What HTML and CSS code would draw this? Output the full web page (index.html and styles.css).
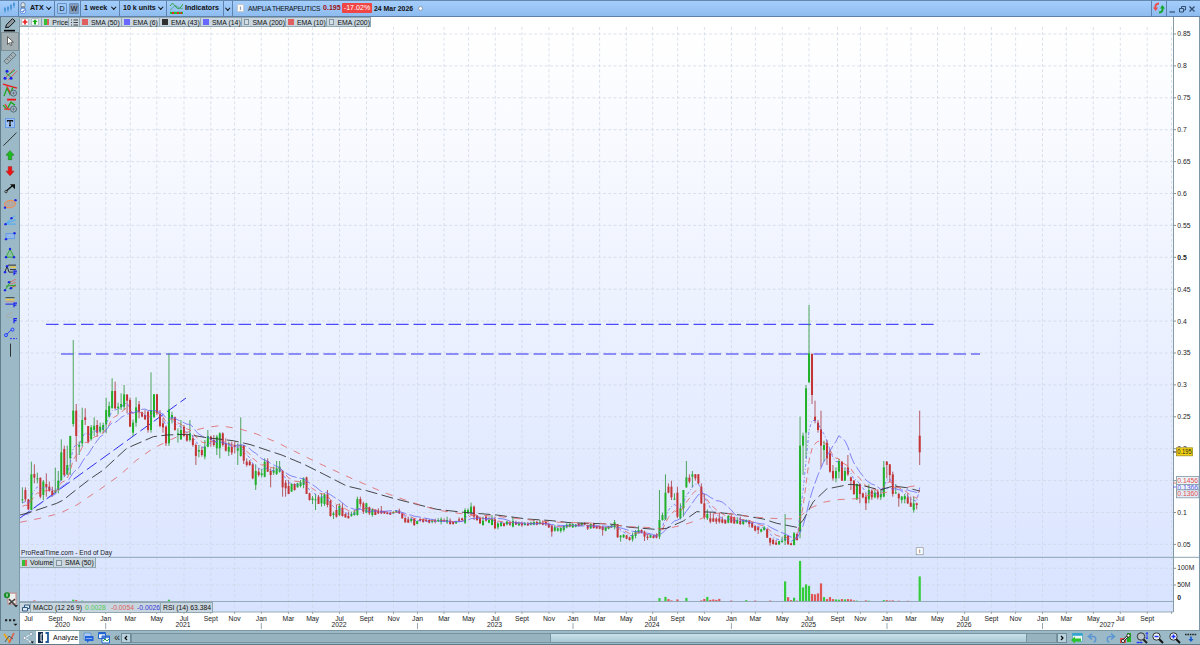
FILE: index.html
```html
<!DOCTYPE html>
<html lang="en">
<head>
    <meta charset="UTF-8">
    <title>ATX - AMPLIA THERAPEUTICS</title>
    <link rel="stylesheet" href="styles.css">
</head>
<body>
<div class="app">
    <!-- Top bar -->
    <div class="topbar">
        <div class="cell" style="width:19px"><svg width="12" height="12" viewBox="0 0 12 12"><path d="M2 5v6M5 4v6M8 2v7M11 0v6" stroke="#3f8fd2" stroke-width="0.7"/><path d="M2 6v3M5 5v3M8 3v4M11 1v3" stroke="#3f8fd2" stroke-width="1.5"/></svg></div>
        <div class="cell symbol">
            <svg width="8" height="12" viewBox="0 0 8 12"><rect x="2" y="0.5" width="4" height="5" rx="2" fill="#dde5ec" stroke="#6a7885" stroke-width="0.8"/><rect x="2" y="4.5" width="4" height="5" rx="2" fill="none" stroke="#6a7885" stroke-width="0.8"/><circle cx="4" cy="9" r="2.8" fill="#eef4ff" stroke="#3d79d8" stroke-width="0.7"/><path d="M2.5 9l1 1.3L5.8 7.6" fill="none" stroke="#2458c8"/></svg>
            <b>ATX</b><i class="chev"></i>
        </div>
        <div class="cell period"><span>D</span><span class="on">W</span></div>
        <div class="cell drop" style="width:39px"><b>1 week</b><i class="chev"></i></div>
        <div class="cell drop" style="width:47px"><b>10 k units</b><i class="chev"></i></div>
        <div class="cell drop" style="width:57px">
            <svg width="13" height="12" viewBox="0 0 13 12"><path d="M0 4c2-4 4-2 6 1s4 2 7-3" fill="none" stroke="#2aa32a"/><path d="M0 8c3-1 3-5 6-4s4 4 7 2" fill="none" stroke="#4a9f76" stroke-width="0.8"/><path d="M0 11h13" stroke="#1cc02b" stroke-width="2.4"/><path d="M2 11h2M7 11h2M10.5 11h1.5" stroke="#e22" stroke-width="2"/></svg>
            <b>Indicators</b>
        </div>
        <div class="cell arrow"><i class="chev"></i></div>
        <div class="quote">
            <span class="info">i</span>
            <span class="company">AMPLIA THERAPEUTICS</span>
            <b class="last">0.195</b>
            <span class="change">-17.02%</span>
            <b class="date">24 Mar 2026</b>
            <i class="dot"></i>
        </div>
        <div class="cell refresh"><svg width="12" height="12" viewBox="0 0 12 12"><path d="M6 1.5C3 1.5 2 3.5 2.5 6" fill="none" stroke="#f04747" stroke-width="1.9"/><path d="M0 5.5h5L2.7 9z" fill="#f04747"/><path d="M6 10.5c3 0 4-2 3.5-5" fill="none" stroke="#15a82a" stroke-width="1.9"/><path d="M7 6.500h5L9.3 3z" fill="#15a82a"/></svg></div>
        <div class="winbtns"><svg width="29" height="10" viewBox="0 0 29 10"><path d="M0.5 8h5.5" stroke="#344e70" stroke-width="1.2"/><path d="M12.5 4V2.500h4v3.500h-1.5M10.5 4.500h4v3.500h-4z" fill="none" stroke="#344e70"/><path d="M20.5 2.500l5 5M25.5 2.500l-5 5" stroke="#344e70" stroke-width="1.3"/></svg></div>
    </div>

    <div class="middle">
        <!-- Drawing tools -->
        <div class="tools">
            <svg viewBox="0 0 16 16"><path d="M3.500 10.500l1-3 6-6 2.500 2.500-6 6z" fill="#8f9ba0" stroke="#111" stroke-width="1"/><path d="M2 13.500h11" stroke="#000" stroke-width="1.6"/></svg>
            <svg class="on" viewBox="0 0 16 16"><path d="M5.500 3.500v8l2-2 1.200 3 1.300-.6-1.200-2.800h2.700z" fill="#fff" stroke="#555" stroke-width="0.9"/></svg>
            <svg viewBox="0 0 16 16"><path d="M2 11L11 2l3 3-9 9z" fill="#a5b4bc" stroke="#56646c" stroke-width="0.8"/><path d="M5 9l1.500 1.500M7 7l1.500 1.500M9 5l1.500 1.500" stroke="#555" stroke-width="0.7"/></svg>
            <svg viewBox="0 0 16 16"><path d="M3 12l9-9M6 14l9-9" stroke="#e35656" stroke-width="0.9"/><path d="M4 7l6 5M6 9l7-5" stroke="#34a334"/><g fill="#1b24e6"><circle cx="5" cy="5" r="1.5"/><circle cx="3" cy="12" r="1.5"/><circle cx="9" cy="12" r="1.5"/></g></svg>
            <svg viewBox="0 0 16 16"><path d="M1 2l14 4" stroke="#f01616" stroke-width="1.5"/><path d="M2 14l3-8 3 6 3-7" fill="none" stroke="#18a818" stroke-width="1.3"/><path d="M5 4l4 8" stroke="#e33" stroke-width="1.1"/><circle cx="11.5" cy="11" r="3" fill="#a6bac6" stroke="#526777"/><path d="M10 11h3M11.500 9.500v3" stroke="#526777" stroke-width="0.7"/></svg>
            <svg viewBox="0 0 16 16"><path d="M5 1.500h9" stroke="#f01616" stroke-width="1.8"/><path d="M1 7l4 4 4-7 4 3" fill="none" stroke="#18a818" stroke-width="1.3"/><path d="M2 11h8M3 6l4 6" stroke="#e33" stroke-width="1.1"/><circle cx="11.5" cy="11" r="3" fill="#a6bac6" stroke="#526777"/><path d="M10 11h3M11.500 9.500v3" stroke="#526777" stroke-width="0.7"/></svg>
            <svg viewBox="0 0 16 16"><rect x="3.500" y="3.500" width="9" height="9" fill="#9fc2f2" stroke="#5b94ea" stroke-width="0.8"/><path d="M5.500 6.500V5.500h5v1M8 5.500v5M7 10.500h2" fill="none" stroke="#111" stroke-width="1.2"/></svg>
            <svg viewBox="0 0 16 16"><path d="M1.500 14.500L14.500 1.500" stroke="#222" stroke-width="0.9"/></svg>
            <svg viewBox="0 0 16 16"><path d="M8 3.500l4 4.500H9.700v4.500H6.300V8H4z" fill="#1ebd1e" stroke="#187d18" stroke-width="0.6"/></svg>
            <svg viewBox="0 0 16 16"><path d="M8 12.500L4 8h2.300V3.500h3.400V8H12z" fill="#f01010" stroke="#b51515" stroke-width="0.6"/></svg>
            <svg viewBox="0 0 16 16"><path d="M4 11l7-6" stroke="#111" stroke-width="1.3"/><path d="M8 4h5v5z" fill="#111"/><circle cx="4" cy="11.500" r="1.2" fill="#a9bdc5" stroke="#222" stroke-width="0.8"/></svg>
            <svg viewBox="0 0 16 16"><ellipse cx="8" cy="8" rx="5.500" ry="3.600" fill="#b4a9a2" stroke="#ef8d50" transform="rotate(-8 8 8)"/><circle cx="3" cy="11.500" r="1.2" fill="#1b24e6"/><circle cx="13.500" cy="4" r="1.2" fill="#1b24e6"/></svg>
            <svg viewBox="0 0 16 16"><path d="M3 12L13 3.500M3 12l11-4.500M3 12h11" stroke="#5aaef0" stroke-width="1.1"/><circle cx="3.500" cy="12" r="1.2" fill="#1b24e6"/><circle cx="9.500" cy="6" r="1.2" fill="#1b24e6"/></svg>
            <svg viewBox="0 0 16 16"><rect x="4" y="5.500" width="8.500" height="5" fill="#94b9e9" stroke="#5f98ea" stroke-width="0.9"/><circle cx="4" cy="11" r="1.2" fill="#1b24e6"/><circle cx="12.500" cy="5" r="1.2" fill="#1b24e6"/></svg>
            <svg viewBox="0 0 16 16"><path d="M8 4l4 8H4z" fill="#91bfa9" stroke="#36a83e"/><g fill="#1b24e6"><circle cx="8" cy="3.800" r="1.2"/><circle cx="4" cy="12" r="1.2"/><circle cx="12" cy="12" r="1.2"/></g></svg>
            <svg viewBox="0 0 16 16"><path d="M3 11L5 5l2 6h4M6 4h8M8 8.500h6" fill="none" stroke="#333" stroke-width="1"/><path d="M8 6h6" stroke="#e8c74b" stroke-width="1.5"/><g fill="#1b24e6"><circle cx="3" cy="11" r="1.2"/><circle cx="5" cy="5" r="1.2"/></g><path d="M12 14V10h3M12 12h2.500" fill="none" stroke="#1822ee" stroke-width="1.2"/></svg>
            <svg viewBox="0 0 16 16"><path d="M3 13l6-9M7 12l7-4M4 9l10-1" stroke="#2ca52c"/><path d="M8 5l6-3M8 7l6-2M9 10l5-1" stroke="#dc6767" stroke-width="0.8"/><g fill="#1b24e6"><circle cx="3" cy="13" r="1.2"/><circle cx="7" cy="5" r="1.2"/><circle cx="9" cy="11" r="1.2"/></g></svg>
            <svg viewBox="0 0 16 16"><path d="M3.500 3.500h9" stroke="#3e4a51"/><path d="M3.500 5.500h9" stroke="#e8c74b" stroke-width="1.5"/><path d="M3.500 7.500h9" stroke="#cc9a9a"/><path d="M3.500 10h8" stroke="#1822ee"/><path d="M12 13V9h3M12 11h2.500" fill="none" stroke="#1822ee" stroke-width="1.2"/></svg>
            <svg viewBox="0 0 16 16"><path d="M4 5l7-3M4 7h7" stroke="#a5afb1" stroke-width="1.3"/><path d="M12 13V8.500h3M12 10.500h2.500" fill="none" stroke="#1822ee" stroke-width="1.2"/></svg>
            <svg viewBox="0 0 16 16"><path d="M4 9l6-6" stroke="#2840f0"/><circle cx="4" cy="9" r="1.5" fill="#8cb0f5" stroke="#2840f0"/><circle cx="10.500" cy="3.500" r="1.5" fill="#8cb0f5" stroke="#2840f0"/><path d="M8 12.500h7" stroke="#2840f0" stroke-dasharray="2 1"/></svg>
            <svg viewBox="0 0 16 16"><path d="M8.500 1.500v13" stroke="#222" stroke-width="0.9"/></svg>
            <div class="tools-end">
                <svg viewBox="0 0 16 16"><rect x="6" y="2" width="8" height="11" fill="#edf2ee" stroke="#c88"/><path d="M7 8l6 6M13 8l-6 5" stroke="#444" stroke-width="1.6"/><circle cx="5" cy="4" r="3" fill="#148a23"/><path d="M5 2.500v3" stroke="#fff"/><path d="M12 14h4l-2 2z" fill="#111"/></svg>
                <svg viewBox="0 0 16 16"><path d="M3 7h2.200M7 7h2.200M11 7h2.200" stroke="#222" stroke-width="2"/><path d="M11.500 10.500h4l-2 2z" fill="#111"/></svg>
            </div>
        </div>

        <!-- Chart -->
        <div class="chart">
            <svg id="plot" width="1180" height="613" viewBox="20 17 1180 613"></svg>
            <div class="legend main">
                <span class="btns">
                    <svg width="8" height="8" viewBox="0 0 8 8"><rect x="0.4" y="0.4" width="7.2" height="7.2" rx="1.5" fill="#f4f7f8" stroke="#9aa9b1" stroke-width="0.7"/><path d="M4 1.600v4.800M1.600 4h4.800" stroke="#ee2222" stroke-width="1.7"/></svg>
                    <svg width="8" height="8" viewBox="0 0 8 8"><rect x="0.4" y="0.4" width="7.2" height="7.2" rx="1.5" fill="#f4f7f8" stroke="#9aa9b1" stroke-width="0.7"/><path d="M4 1.300l2.700 2.800H5v2.400H3V4.100H1.300z" fill="#18ad18"/></svg>
                </span>
                <span style="width:27px"><i class="sw two"></i>Price</span>
                <span style="width:11px"><svg width="7" height="7" viewBox="0 0 7 7"><path d="M0 1h1M0 3.500h1M0 6h1M2.500 1H7M2.500 3.500H7M2.500 6H7" stroke="#333" stroke-width="0.9"/></svg></span>
                <span style="width:42px"><i class="sw" style="background:#e06060"></i>SMA (50)</span>
                <span style="width:38px"><i class="sw" style="background:#6868ff"></i>EMA (6)</span>
                <span style="width:41px"><i class="sw" style="background:#303030"></i>EMA (43)</span>
                <span style="width:41px"><i class="sw" style="background:#6868ff"></i>SMA (14)</span>
                <span style="width:44px"><i class="sw none"></i>SMA (200)</span>
                <span style="width:41px"><i class="sw" style="background:#e06060"></i>EMA (10)</span>
                <span style="width:43px"><i class="sw none"></i>EMA (200)</span>
            </div>
            <div class="legend volume">
                <span style="width:34px"><i class="sw two"></i>Volume</span>
                <span style="width:41px"><i class="sw none"></i>SMA (50)</span>
            </div>
            <div class="legend macd">
                <span style="width:11px"><svg width="8" height="8" viewBox="0 0 8 8"><path d="M2.500 3V1h5v3.500H5.500M.5 3.500h5V7h-5z" fill="#d7e6f4" stroke="#31587e"/></svg></span>
                <span style="width:130px">MACD (12 26 9)<em class="up">0.0028</em><em class="down">-0.0054</em><em class="sig">-0.0026</em></span>
                <span style="width:51px">RSI (14) 63.384</span>
            </div>
        </div>
    </div>

    <!-- Bottom bar -->
    <div class="bottombar">
        <div class="cell pens"><svg width="12" height="12" viewBox="0 0 12 12"><path d="M1 2l6 8" stroke="#eea51c" stroke-width="2"/><path d="M11 1L6 11" stroke="#e35a42" stroke-width="1.5"/><path d="M2 10l4-6 4 3" fill="none" stroke="#4a5558" stroke-width="0.9"/></svg></div>
        <div class="share"><svg width="12" height="12" viewBox="0 0 12 12"><path d="M9 2L3 6l6 4" fill="none" stroke="#eef5fa"/><g fill="#f6fafc" stroke="#6b8494" stroke-width="0.6"><circle cx="9" cy="2" r="1.5"/><circle cx="2.500" cy="6" r="1.5"/><circle cx="8" cy="9.500" r="1.5"/></g><path d="M8.500 9.500H12l-1.700 2z" fill="#111"/></svg></div>
        <div class="tab"><svg width="12" height="11" viewBox="0 0 12 11"><rect width="5" height="11" fill="#102c4c"/><path d="M4.500 2H3v7h1.500" fill="none" stroke="#fff"/><path d="M7.500 1H10v9H7.500" fill="none" stroke="#1d5b9e" stroke-width="1.8"/></svg>Analyze</div>
        <div class="bicons">
            <svg width="11" height="12" viewBox="0 0 11 12"><path d="M1 1h7v7H1z" fill="#a8c9f6" stroke="#5583c4" stroke-width="0.6"/><path d="M2 4h8.500v5H6l-2 2V9H2z" fill="#2063dd"/><path d="M3.500 6.500h1M5.500 6.500h1M7.500 6.500h1" stroke="#fff"/></svg>
            <svg width="12" height="12" viewBox="0 0 12 12"><path d="M.5.5h7v6h-7zM4 4h7.500v7H4z" fill="#eef6ff" stroke="#2464cc"/><path d="M.5 1.500h7M4 5h7.500" stroke="#2464cc" stroke-width="1.4"/><path d="M5 9l2-2 2 2 2-2" fill="none" stroke="#28a542"/></svg>
            <span class="dbl">«</span>
        </div>
        <div class="sbtn"><svg width="4" height="6" viewBox="0 0 4 6"><path d="M3 1L1 3l2 2" fill="none" stroke="#000" stroke-width="1.1"/></svg></div>
        <div class="track"><div class="thumb"></div></div>
        <div class="sbtn"><svg width="4" height="6" viewBox="0 0 4 6"><path d="M1 1l2 2-2 2" fill="none" stroke="#000" stroke-width="1.1"/></svg></div>
        <div class="actions">
            <svg viewBox="0 0 12 12"><rect x="1.500" y="1.500" width="10" height="8" fill="#eef5f8" stroke="#48a0c0" stroke-width="0.7"/><path d="M1.500 2.500h10" stroke="#2ea3cf" stroke-width="2.5"/><path d="M0 8l4-3.500v2h6v3H4v2z" fill="#2bc52b"/></svg>
            <svg viewBox="0 0 12 12"><path d="M2 4.500h4c3 0 4 3 1 6M5 1.500l-3.500 3L5 7.500" fill="none" stroke="#5b95d4" stroke-width="1.5"/></svg>
            <svg viewBox="0 0 12 12"><path d="M10 4.500H6c-3 0-4 3-1 6M7 1.500l3.500 3L7 7.500" fill="none" stroke="#5b95d4" stroke-width="1.5"/></svg>
            <svg viewBox="0 0 12 12"><path d="M9 1v9" stroke="#22b322" stroke-width="4"/><path d="M0 6h6v5H0z" fill="#e44b4b"/><path d="M3 9l5-5" stroke="#333" stroke-width="2.4"/><path d="M3 9l5-5" stroke="#f5f5f5"/><circle cx="3" cy="9" r="1.6" fill="#fff" stroke="#333"/><circle cx="8.500" cy="3.500" r="1.6" fill="#fff" stroke="#333"/></svg>
            <svg viewBox="0 0 12 12"><circle cx="5" cy="4.500" r="3.700" fill="#b8c6cc" stroke="#333"/><path d="M7.500 7.500l3.500 3.500" stroke="#222" stroke-width="2"/><path d="M11 .5v6M9.800 2L11 .5 12 2M9.800 5.500l1.200 1.500 1-1.500M1 10.500h5M2 9.500l-1 1 1 1M5 9.500l1 1-1 1" stroke="#2030ff" fill="none" stroke-width="0.9"/></svg>
            <svg viewBox="0 0 12 12"><circle cx="4.500" cy="4.500" r="3.700" fill="#e8eff4" stroke="#333"/><path d="M7.300 7.300l3.700 3.700" stroke="#111" stroke-width="2"/><path d="M2.500 4.500h4" stroke="#2030ff" stroke-width="1.4"/></svg>
            <svg viewBox="0 0 12 12"><circle cx="4.500" cy="4.500" r="3.700" fill="#e8eff4" stroke="#333"/><path d="M7.300 7.300l3.700 3.700" stroke="#111" stroke-width="2"/><path d="M2.500 4.500h4M4.500 2.500v4" stroke="#2030ff" stroke-width="1.4"/></svg>
            <svg viewBox="0 0 12 12"><path d="M0 2.500h12" stroke="#222" stroke-width="1.3" stroke-dasharray="1.6 .8"/><path d="M6 4.500v3" stroke="#1557d0" stroke-width="1.6"/><path d="M3.500 7h5L6 10z" fill="#1557d0"/></svg>
        </div>
    </div>
</div>
<script src="chart.js"></script>
</body>
</html>
```

FILE: styles.css
```css
* {
    box-sizing: border-box;
}

body {
    margin: 0;
    overflow: hidden;
    font-family: "Liberation Sans", Arial, sans-serif;
    font-size: 6.9px;
    color: #111;
    background: #fff;
}

i, em {
    font-style: normal;
}

svg {
    display: block;
    flex: none;
}

.app {
    display: flex;
    flex-direction: column;
    width: 1200px;
    height: 645px;
}

/* top bar */
.topbar {
    display: flex;
    height: 17px;
    flex: none;
    background: linear-gradient(#a4cdfb, #8ebcf0);
    border-top: 1px solid #6389b0;
    border-bottom: 1px solid #5f80a4;
    font-size: 7.1px;
}

.cell {
    display: flex;
    align-items: center;
    flex: none;
    border-right: 1px solid #5d83ae;
    padding-left: 3px;
    white-space: nowrap;
}

.topbar .cell, .quote {
    padding-bottom: 1px;
}

.topbar .symbol {
    width: 36px;
    padding-left: 0;
}

.symbol b {
    margin-left: 3px;
}

.chev {
    width: 3.5px;
    height: 3.5px;
    border-right: 1px solid #111;
    border-bottom: 1px solid #111;
    transform: rotate(45deg);
    margin: -2px 4px 0 auto;
}

.topbar .period {
    width: 26px;
    gap: 2px;
    padding-left: 2px;
}

.period span {
    width: 10px;
    height: 11px;
    line-height: 10px;
    text-align: center;
    border: 1px solid #6c92bf;
    border-radius: 1px;
}

.period .on {
    background: #8399b8;
}

.drop {
    gap: 2px;
}

.topbar .arrow {
    width: 9px;
    padding: 0;
}

.arrow .chev {
    margin: -2px auto 0;
}

.quote {
    display: flex;
    align-items: center;
    flex: 1;
    white-space: nowrap;
    padding-left: 4px;
}

.info {
    width: 7px;
    height: 8px;
    border: 1px solid #c3c9cf;
    background: #fff;
    font-size: 6px;
    line-height: 6px;
    text-align: center;
}

.company {
    width: 75px;
    margin-left: 4px;
    font-size: 6.7px;
    letter-spacing: -0.28px;
}

.last {
    width: 19px;
    color: #a11212;
}

.change {
    width: 30px;
    height: 10px;
    line-height: 10px;
    text-align: center;
    border-radius: 1px;
    background: #f04545;
    color: #fff;
}

.date {
    margin-left: 2px;
    font-size: 6.9px;
}

.dot {
    width: 5px;
    height: 5px;
    margin-left: 5px;
    border: 1px solid #8e9dac;
    border-radius: 50%;
    background: #fff;
}

.refresh {
    width: 16px;
    padding-left: 1px;
    border-left: 1px solid #5d83ae;
}

.winbtns {
    display: flex;
    align-items: center;
    width: 33px;
    padding-left: 2px;
}

/* left tools */
.middle {
    display: flex;
    height: 613px;
    flex: none;
}

.tools {
    display: flex;
    flex-direction: column;
    align-items: center;
    width: 20px;
    flex: none;
    background: #9bb9c6;
    border-left: 1px solid #637f8b;
    border-right: 1px solid #7e9ba7;
}

.tools svg {
    width: 16px;
    height: 16.28px;
}

.tools .on {
    background: #a2aeb2;
    outline: 0.7px solid #7e8f96;
    outline-offset: -0.5px;
}

.tools-end {
    margin-top: auto;
    padding-bottom: 1px;
}

.tools-end svg {
    margin-top: 5px;
}

/* chart */
.chart {
    position: relative;
    flex: 1;
}

.legend {
    position: absolute;
    left: 0;
    display: flex;
    height: 10px;
    background: #c9d6df;
    border: 1px solid #91a8b3;
    border-left: none;
}

.legend span {
    display: flex;
    align-items: center;
    flex: none;
    padding-left: 2px;
    border-right: 1px solid #91a8b3;
    white-space: nowrap;
}

.legend span:last-child {
    border-right: none;
}

.main {
    top: 0;
}

.volume {
    top: 540px;
    height: 11px;
}

.macd {
    top: 585px;
    height: 11px;
    font-size: 6.8px;
}

.legend .btns {
    width: 22px;
    gap: 2px;
    padding-left: 1px;
}

.sw {
    width: 6px;
    height: 6px;
    margin-right: 3px;
}

.two {
    background: linear-gradient(90deg, #35c135 50%, #e06060 50%);
}

.none {
    border: 1px solid #8296a0;
    background: #d5dfe5;
}

.up {
    color: #4fcb5a;
    margin-left: 3px;
}

.down {
    color: #dd5f5f;
    margin-left: 5px;
}

.sig {
    color: #3535dd;
    margin-left: 3px;
}

/* svg text */
.label {
    font-size: 6.8px;
    fill: #222;
}

.label.bold {
    font-weight: bold;
}

/* bottom bar */
.bottombar {
    display: flex;
    align-items: center;
    height: 15px;
    background: #9bb9c6;
    border-top: 1px solid #7b97a2;
    border-bottom: 1px solid #5f7b87;
}

.pens {
    width: 20px;
    height: 13px;
}

.share {
    width: 16px;
    padding-left: 2px;
}

.tab {
    display: flex;
    align-items: center;
    gap: 3px;
    width: 43px;
    height: 13px;
    padding-left: 2px;
    background: #fff;
    font-size: 7.1px;
}

.bicons {
    display: flex;
    align-items: center;
    gap: 4px;
    width: 42px;
    padding-left: 4px;
}

.dbl {
    font-size: 11px;
    line-height: 8px;
    margin-top: -2px;
    color: #333;
}

.sbtn {
    display: flex;
    align-items: center;
    justify-content: center;
    width: 10px;
    height: 10px;
    flex: none;
    background: #b9d3de;
    border: 1px solid #6f8b97;
}

.track {
    width: 926px;
    height: 10px;
    flex: none;
    background: #96b3bf;
    border: 1px solid #7793a0;
}

.thumb {
    width: 477px;
    height: 8px;
    margin-left: 418px;
    background: linear-gradient(#c9e2ea, #a9c8d4);
    border: 1px solid #7793a0;
    border-width: 0 1px;
}

.actions {
    display: flex;
    gap: 4.3px;
    padding-left: 4px;
}

.actions svg {
    width: 12px;
    height: 12px;
}
```

FILE: chart.js
```js
const NS = 'http://www.w3.org/2000/svg';
const plot = document.getElementById('plot');
const GRID = '#cdd5e4';

function add(tag, attrs, text) {
    const el = document.createElementNS(NS, tag);
    for (const key in attrs) el.setAttribute(key, attrs[key]);
    if (text !== undefined) el.textContent = text;
    plot.appendChild(el);
    return el;
}

function line(x1, y1, x2, y2, stroke, width, dash) {
    add('line', { x1, y1, x2, y2, stroke, 'stroke-width': width || 1, 'stroke-dasharray': dash || 'none' });
}

const candleX = k => 22.4 + 2.991 * k;

// each candle: colour + high, body top, body bottom, low (1/3 px below "top")
const segments = [
    { top: 330, rows: `g472 508 511 520,r472 480 508 515,r508 508 538 540,g395 433 540 540,r403 432 443 460,g428 445 448 460,r443 443 500 505,g450 455 495 510,r430 462 472 500,r455 470 482 485,
r470 482 495 500,g413 482 485 490,g423 452 480 490,g328 367 450 453,r347 357 435 440,g347 405 433 435,g317 318 385 435,g30 242 282 290,r222 242 318 395,g335 345 350 375,
g233 270 340 350,r235 262 270 285,r288 288 335 340,g285 292 328 332,g262 287 300 318,r270 285 308 320,g278 290 305 310,g278 285 300 310,g203 240 283 310,g215 228 260 262,
g145 183 235 235,r155 183 235 238,g218 230 235 252,g190 222 232 240,g165 193 230 240,r192 194 212 250,r203 210 290 290,g268 278 308 318,g202 232 278 290,r213 223 245 265,
r245 247 260 262,r240 255 268 270,r243 245 300 308,g127 240 300 308,g192 193 262 262,r192 193 250 255,r240 252 288 292,r265 280 292 308,r288 290 340 348,g70 238 340 348,
g245 255 265 280,r260 262 300 302,g295 310 315 338,g270 300 328 330,r285 290 318 320,r312 315 332 335,g270 310 330 335,r315 325 345 350,r340 345 378 405,g345 360 365 382,
r350 360 375 380,g330 350 380 388,g300 318 350 352,r317 320 330 350,r315 330 345 350,g315 320 355 375,g307 310 355 385,r307 310 345 350,r325 340 362 365,g335 350 365 378,
r335 350 368 375,r335 345 350 370,g340 355 362 405,g262 345 378 380,r345 347 392 402,r385 395 405 410,r390 395 405 408` },
    { top: 400, rows: `r190 193 235 238,g193 213 255 270,r205 215 225 230,g207 220 225 232,g175 185 230 232,r175 183 215 216,r205 213 225 262,g200 212 218 225,g183 205 222 225,g183 200 215 218,
r210 213 262 290,r240 248 265 290,r240 258 282 282,g250 252 275 275,r250 252 270 272,g248 250 262 262,g240 247 258 262,g232 235 255 265,r230 232 282 282,r278 280 300 302,
g288 295 300 312,g282 298 301 330,r285 290 312 312,g280 292 310 320,g280 283 312 318,r270 283 315 322,r300 303 348 350,g335 340 345 357,r315 330 350 353,g310 318 345 348,
r310 323 348 350,r340 342 352 353,r335 348 355 355,g335 343 348 350,g330 337 345 347,g290 297 345 347,r290 297 312 320,r305 310 335 342,g308 310 338 340,r320 322 340 345,
g325 328 345 350,r328 330 345 345,r325 332 340 342,r318 332 340 342,r333 335 340 342,r335 338 342 343,r335 338 344 345,g334 336 340 342,g330 333 337 338,r326 332 340 342,
r338 340 355 356,r352 354 367 368,r350 358 368 368,g352 357 363 368,r355 356 375 378,g362 363 372 373,r355 357 362 365,r355 358 366 368,r355 360 364 366,r358 360 368 370,
g358 362 366 370,r356 360 366 370,g354 360 364 366,g352 358 366 373,r355 360 364 366,g350 360 367 372,r355 362 372 374,r364 366 372 374,g362 366 370 372,r352 358 362 365,
r353 355 360 362,g325 330 368 372,g325 330 340 342,g308 320 338 345,r317 320 350 360,r345 347 360 363,r350 355 370 372,g350 362 375 377,r345 350 362 365,g352 360 368 370,
g345 357 375 376,r350 358 385 388,g368 370 382 388,g365 368 378 380,r368 370 378 380,g362 365 373 376,r362 368 374 378,g350 363 380 382,r362 366 374 375,g365 370 376 378,
r365 370 376 380,g366 370 375 377,r366 372 376 378,g365 368 374 376,g360 366 374 376,r362 366 374 376,g360 366 372 374,r362 368 374 376,r362 366 373 378,r370 372 382 384` },
    { top: 440, rows: `r255 258 275 290,g255 262 272 275,g262 265 272 275,g262 264 273 278,g256 258 270 275,g250 254 262 265,g250 252 260 262,g250 252 262 264,g252 254 260 262,r250 251 258 260,
g248 249 256 258,r247 249 254 256,r254 255 266 270,g250 252 265 267,r248 252 264 266,r256 258 265 267,r256 258 266 268,r258 260 270 287,g260 262 272 274,g258 260 266 268,
g254 256 262 264,g240 247 262 268,r252 253 292 293,g285 287 292 305,g283 284 292 294,r285 286 296 298,r290 292 300 302,g278 285 298 305,g270 274 288 295,g257 270 278 280,
r268 270 278 280,r272 275 290 303,r283 290 294 300,g284 285 293 294,r285 287 294 295,r280 286 293 295,g150 240 290 297,g218 225 240 242,g103 158 238 240,r130 140 158 160,
r122 140 172 180,g160 176 179 180,r140 158 230 235,g190 205 235 238,g150 150 205 230,g63 112 142 143,r103 113 125 130,g93 103 110 142,r102 103 115 122,r102 103 130 132,
r130 140 190 192,r162 190 232 238,g208 222 235 240,r218 235 245 250,r222 235 245 245,r232 236 245 252,r218 235 245 250,r230 238 248 250,r238 240 250 252,g225 228 248 250,
r225 230 248 250,r230 232 250 252,g232 240 250 252,r230 242 252 255,g238 240 252 255,g238 240 246 248,r240 242 252 262,r246 248 262 264,r256 258 272 274,r260 262 270 282,
g266 268 275 277,g258 262 270 272,r266 268 293 294,r293 294 308 317,r295 300 312 314,r300 308 314 315,g302 303 313 315,g290 302 306 308,g222 285 302 315,r286 287 313 314,
r308 310 315 316,g276 280 315 316,r278 282 300 302` },
    { top: 290, rows: `g380 467 725 745,g428 437 467 555,g285 295 428 505,g45 190 277 278,r190 192 315 342,r332 380 392 400,r390 398 420 428,r362 418 467 532,g452 465 480 515,r450 458 505 525,
r478 490 545 548,r525 543 565 572,g532 543 565 577,g507 513 545 565,r513 515 572 573,g532 543 572 573,r495 532 553 558,r560 562 573 600,r570 572 612 615,g581 582 628 630,
r580 583 612 640,r608 610 622 625,r608 620 640 660,g583 600 628 640,r598 602 622 630,g600 608 622 625,r598 605 622 628,g600 612 622 630,g513 532 620 622,r513 515 525 565,
r522 523 555 577,r545 553 612 620,g582 607 610 612,r608 612 625 650,g618 620 630 640,g612 618 628 640,r610 622 640 642,r620 638 650 651,g620 640 660 668,r638 640 645 658,r362 437 487 525` }
];

const candles = [];
segments.forEach(seg => seg.rows.split(',').forEach(row => {
    const r = row.trim();
    const v = r.slice(1).split(' ').map(n => seg.top + n / 3);
    candles.push({ green: r[0] === 'g', high: v[0], open: v[1], close: v[2], low: v[3] });
}));

// background
plot.innerHTML = '<defs><linearGradient id="bg" x1="0" y1="0" x2="0" y2="1"><stop offset="0.03" stop-color="#ffffff"/><stop offset="1" stop-color="#d8e3ff"/></linearGradient></defs>';
add('rect', { x: 20, y: 17, width: 1153, height: 595, fill: 'url(#bg)' });

// grid and axes
const months = [28.5, 55.3, 79, 105.7, 130.3, 156.8, 184, 210.8, 234.6, 261.3, 288.4, 312.6, 339.5, 366.5, 393.5, 417.5, 444, 468.6, 495.3, 522, 549, 573, 599.6, 626.3, 652.7, 677.6, 704.4, 731.4, 755.4, 782.3, 809, 837.5, 860.4, 887, 911, 937.5, 964.6, 991.4, 1015.6, 1042.5, 1066.3, 1093.3, 1120.3, 1147.2, 1171.5];
const names = ['Jul', 'Sept', 'Nov', 'Jan', 'Mar', 'May'];
months.forEach((x, i) => {
    line(x, 27, x, 612, GRID, 0.7, '3 2.3');
    line(x, 612, x, 614, '#788', 0.7);
    if (i < 44) add('text', { x, y: 620.5, class: 'label', 'text-anchor': 'middle' }, names[i % 6]);
    if (i % 6 === 3) line(x, 623, x, 629, '#7c929d', 0.8);
});
[[62.5, 2020], [183, 2021], [339, 2022], [494.5, 2023], [652, 2024], [808.5, 2025], [964, 2026], [1107, 2027]].forEach(
    y => add('text', { x: y[0], y: 626.7, class: 'label', 'text-anchor': 'middle' }, y[1]));

for (let i = 1; i <= 17; i++) {
    const y = 576.3 - i * 31.9;
    line(20, y, 1173, y, GRID, 0.7, '3 2.3');
    line(1173, y, 1176, y, '#677', 0.8);
    add('text', { x: 1177.3, y: y + 2.4, class: 'label' + (i === 10 ? ' bold' : '') }, String(+(i * 0.05).toFixed(2)));
}
[[568.3, '100M'], [585, '50M']].forEach(v => {
    line(20, v[0], 1173, v[0], GRID, 0.7, '3 2.3');
    line(1173, v[0], 1176, v[0], '#677', 0.8);
    add('text', { x: 1177.3, y: v[0] + 2, class: 'label' }, v[1]);
});
add('text', { x: 1177.3, y: 600, class: 'label bold' }, '0');

// trend lines
line(46, 324.4, 934, 324.4, '#4a4aff', 1.1, '12.6 4.9');
line(61, 354, 980, 354, '#6c6cf6', 1.5, '12.6 4.9');
line(20, 518, 186, 398, '#3030ee', 1, '12 4.5');

// candles
candles.forEach((c, k) => {
    const x = candleX(k);
    line(x, c.high, x, c.low, c.green ? '#3b9d48' : '#b04a52', 0.9);
    add('rect', { x: x - 1, y: c.open, width: 2, height: Math.max(c.close - c.open, 1), fill: c.green ? '#20b128' : '#c43434' });
});

// moving averages
const closes = candles.map(c => c.green ? c.open : c.close);

function ema(n, seed) {
    let v = seed;
    return closes.map(c => v += (c - v) * 2 / (n + 1));
}

function sma(n, seed) {
    const all = Array(n).fill(seed).concat(closes);
    return closes.map((c, k) => all.slice(k + 1, k + 1 + n).reduce((a, b) => a + b) / n);
}

function curve(points, stroke, dash, width) {
    add('polyline', { points: points.map(p => p[0].toFixed(1) + ',' + p[1].toFixed(1)).join(' '), fill: 'none', stroke, 'stroke-width': width || 0.75, 'stroke-dasharray': dash });
}

const series = values => values.map((y, k) => [candleX(k), y]);
curve(series(ema(6, 504)), '#6464f4', '3 2 1 2');
curve(series(ema(10, 508)), '#e05656', '6 4');
curve(series(sma(14, 517)), '#6060f4', '12 3');

curve([[20, 515], [30, 512.3], [40, 509], [56.7, 503.3], [63.3, 500], [76.7, 489.3], [90, 479], [103.3, 470], [126.7, 448.3], [153.3, 436.7], [166.7, 435], [186.7, 434.3], [206.7, 437.7], [233.3, 440.7], [250, 444.5], [281.7, 455], [303.3, 464], [323.3, 474], [346.7, 486], [366.7, 490.7], [393.3, 498.3], [416.7, 504.3], [436.7, 509.3], [463.3, 512.3], [496.7, 515], [526.7, 519], [550, 520.5], [570, 522.7], [610, 524], [630, 527.3], [655, 529.3], [666.7, 528.3], [683.3, 521], [696.7, 511.7], [716.7, 512.3], [740, 515], [763.3, 519], [776.7, 523.3], [796.7, 527.3], [803.3, 520], [813.3, 501.7], [826.7, 489], [850, 484.3], [863.3, 485.7], [880, 490], [893.3, 486], [906.7, 487.7], [919.7, 491]], '#333', '12 4.5', 0.9);
curve([[20, 522.3], [40, 518.3], [60, 513.3], [76.7, 505], [100, 489.3], [120, 475], [136.7, 460], [153.3, 448.3], [170, 440], [186.7, 432.3], [206.7, 427.3], [220, 425.7], [240, 429], [256.7, 434], [276.7, 442.3], [316.7, 462.3], [350, 477.7], [383.3, 492.3], [410, 501.7], [436.7, 510], [463.3, 514], [500, 516.7], [550, 522], [600, 523.3], [630, 526.7], [653.3, 527.7], [663.3, 529.3], [683.3, 525], [700, 519.3], [710, 514], [723.3, 512.7], [750, 516.7], [770, 518.3], [796.7, 519], [810, 508.3], [823.3, 502.3], [836.7, 499.7], [856.7, 498.7], [873.3, 494], [886.7, 492.3], [893.3, 487.3], [906.7, 487.3], [919.7, 485]], '#e06a6a', '7 7.5', 0.85);

// volume: index, bar height
[[4, 1], [14, .5], [17, 1.7], [18, 1.3], [20, .7], [49, 1.7], [213, 3.3], [215, 4.5], [216, 2.3], [217, 1], [219, 2], [222, 3.5], [227, 1], [228, 2.5], [229, 4.5], [230, 1.5], [231, 2], [232, 1.5], [233, 2.5], [237, .8], [242, 1.3], [245, .8], [250, .8], [255, 20], [256, 4.2], [257, 1.3], [258, 3.7], [259, .7], [260, 40.5], [261, 14], [262, 17], [263, 15.5], [264, 7.5], [265, 7], [266, 8], [267, 18], [268, 4.3], [269, 2.3], [270, 4.3], [271, 2.3], [272, 2], [273, 1.7], [274, 2.3], [275, 2], [276, 2.3], [277, 2], [278, 1], [279, .8], [282, 1], [283, .7], [288, 1.3], [289, 1.2], [290, .8], [291, 1], [293, .7], [296, .6], [300, 25]].forEach(v => {
    const green = candles[v[0]].green || v[0] === 300;
    add('rect', { x: candleX(v[0]) - 1.1, y: 601.4 - v[1], width: 2.2, height: v[1], fill: green ? '#35cc3c' : '#e05555' });
});
line(20, 601.5, 1173, 601.5, '#879daa', 0.8);
line(20, 557.3, 1200, 557.3, '#8ba3b2', 1);
line(20, 612, 1173.5, 612, '#849ba5', 0.8);
line(1173.5, 17, 1173.5, 612, '#849ba5', 1);
line(1199.5, 17, 1199.5, 630, '#7c98aa', 1);

// price tags
function tag(y, text, fill, colour, width) {
    add('rect', { x: 1176.5, y, width, height: 8, fill, stroke: '#7e98a5', 'stroke-width': 0.8 });
    add('text', { x: 1177.3, y: y + 6.4, class: 'label', style: 'fill:' + colour }, text);
}
tag(484, '0.1366', '#eef3f8', '#5656e8', 22.5);
tag(476.5, '0.1456', '#eef3f8', '#dd5050', 22.5);
tag(489.8, '0.1360', '#e4ebf5', '#dd5050', 22.5);
add('rect', { x: 1176.5, y: 447.8, width: 16, height: 8, fill: '#f5d312', stroke: '#a08d20', 'stroke-width': 0.8 });
add('text', { x: 1177.2, y: 454.2, class: 'label', textLength: 14.5, lengthAdjust: 'spacingAndGlyphs' }, '0.195');
line(1173, 452, 1176, 452, '#222', 1);
line(1173, 483, 1176, 483, '#d66', 0.8);
line(1173, 487, 1176, 487, '#55e', 0.8);

add('text', { x: 21, y: 555.4, class: 'label', textLength: 91, lengthAdjust: 'spacingAndGlyphs' }, 'ProRealTime.com - End of Day');
add('rect', { x: 916.2, y: 547.7, width: 7, height: 7, fill: '#fff', stroke: '#8b959c', 'stroke-width': 0.7 });
add('text', { x: 919.7, y: 553.4, class: 'label', 'text-anchor': 'middle', style: 'font-size:6px' }, 'i');
```
